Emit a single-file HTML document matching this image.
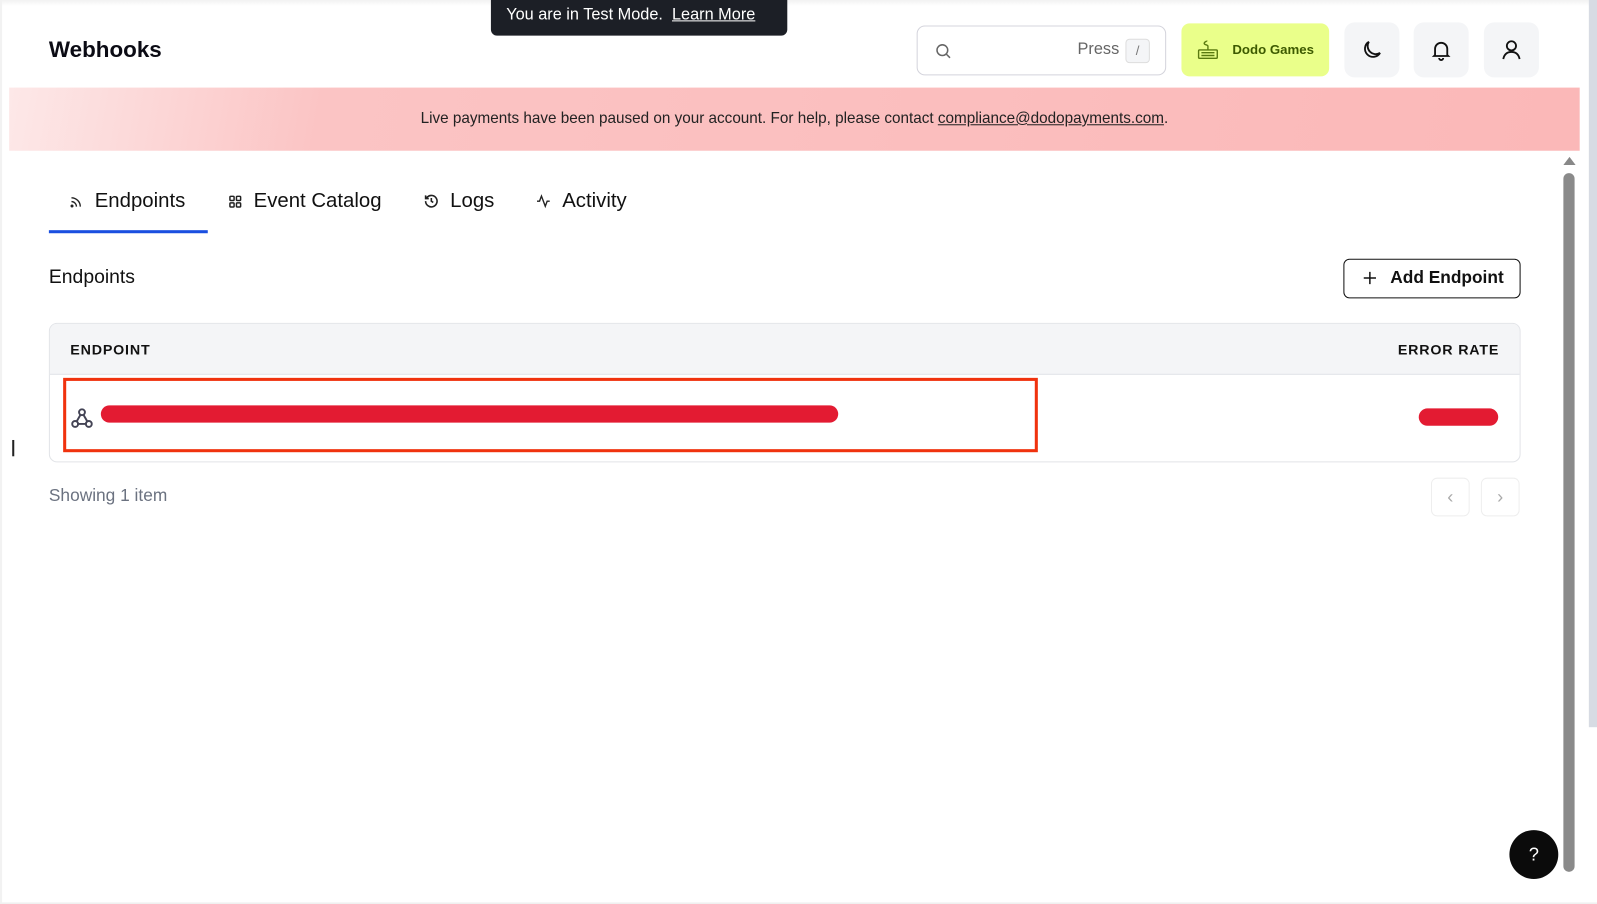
<!DOCTYPE html>
<html><head><meta charset="utf-8"><style>
*{box-sizing:border-box;margin:0;padding:0}
body{width:1597px;height:904px;overflow:hidden;background:#fff;font-family:"Liberation Sans",sans-serif;color:#111}
#w{position:absolute;left:0;top:0;width:1568px;height:888px;transform:scale(1.01849);transform-origin:0 0}
.abs{position:absolute}
.ib{position:absolute;top:22px;width:54px;height:54px;border-radius:10px;background:#f4f5f7;display:flex;align-items:center;justify-content:center}
</style></head><body><div id="w">
<div class="abs" style="left:0;top:0;width:1568px;height:6px;background:linear-gradient(#f2f2f2,#fff)"></div>
<div class="abs" style="left:48px;top:36px;font-size:22px;font-weight:bold;color:#0b0b14">Webhooks</div>
<div class="abs" style="left:482px;top:0;width:291px;height:35px;background:#1c1f26;border-radius:0 0 6px 6px;color:#fff;font-size:16px;line-height:29px;padding-left:15px">You are in Test Mode. &nbsp;<u>Learn More</u></div>
<div class="abs" style="left:900px;top:25px;width:245px;height:49px;border:1px solid #d4d4dc;border-radius:8px">
<svg class="abs" style="left:16px;top:15px" width="18" height="18" viewBox="0 0 24 24" fill="none" stroke="#666" stroke-width="2"><circle cx="11" cy="11" r="7"/><path d="M16 16l5 5"/></svg>
<span class="abs" style="left:157px;top:14px;font-size:16px;color:#666">Press</span>
<span class="abs" style="left:204px;top:12px;width:24px;height:24px;border:1px solid #ddd;border-radius:4px;background:#f4f5f7;font-size:13px;color:#777;text-align:center;line-height:22px">/</span></div>
<div class="abs" style="left:1160px;top:23px;width:145px;height:52px;background:#eaff8a;border-radius:8px;font-size:13px;font-weight:bold;color:#3d5a00;line-height:52px;padding-left:50px">Dodo Games
<svg class="abs" style="left:15px;top:15px" width="22" height="22" viewBox="0 0 24 24" fill="none" stroke="#5a7a10" stroke-width="1.5"><rect x="2" y="12" width="20" height="9" rx="1"/><path d="M5 15h14M5 18h14M12 12V8c0-2-4-1-4-3s3-2 3-3"/></svg></div>
<div class="ib" style="left:1320px"><svg width="24" height="24" viewBox="0 0 24 24" fill="none" stroke="#111" stroke-width="1.8"><path d="M20 15A8 8 0 0 1 9 4a8 8 0 1 0 11 11z"/></svg></div>
<div class="ib" style="left:1388px"><svg width="24" height="24" viewBox="0 0 24 24" fill="none" stroke="#111" stroke-width="1.8"><path d="M6 17V11a6 6 0 0 1 12 0v6l1 1H5zM10 20a2 2 0 0 0 4 0"/></svg></div>
<div class="ib" style="left:1457px"><svg width="24" height="24" viewBox="0 0 24 24" fill="none" stroke="#111" stroke-width="1.8"><circle cx="12" cy="8" r="4.5"/><path d="M4 21c1-5 4-7 8-7s7 2 8 7"/></svg></div>
<div class="abs" style="left:9px;top:86px;width:1542px;height:62px;background:linear-gradient(100deg,#fde8e8 0%,#fbc4c4 20%,#fbb8b8 100%);font-size:15px;color:#222;text-align:center;line-height:62px">Live payments have been paused on your account. For help, please contact <u>compliance@dodopayments.com</u>.</div>
<div class="abs" style="left:1535px;top:170px;width:11px;height:686px;background:#8a8a8a;border-radius:6px"></div>
<div class="abs" style="left:1535px;top:154px;width:0;height:0;border-left:6px solid transparent;border-right:6px solid transparent;border-bottom:8px solid #888"></div>
<div class="abs" style="left:1560px;top:0;width:8px;height:714px;background:#d7dbe3"></div>
<div class="abs" style="left:0;top:0;width:2px;height:888px;background:#f2f2f2"></div>
<svg class="abs" style="left:68px;top:192px" width="13" height="13" viewBox="0 0 24 24" fill="none" stroke="#222" stroke-width="2.5"><path d="M4 11a9 9 0 0 1 9 9M4 4a16 16 0 0 1 16 16"/><circle cx="5" cy="19" r="1.5"/></svg>
<div class="abs" style="left:93px;top:186px;font-size:20px">Endpoints</div>
<svg class="abs" style="left:224px;top:191px" width="14" height="14" viewBox="0 0 24 24" fill="none" stroke="#222" stroke-width="2.5"><rect x="3" y="3" width="7" height="7" rx="1.5"/><rect x="14" y="3" width="7" height="7" rx="1.5"/><rect x="3" y="14" width="7" height="7" rx="1.5"/><rect x="14" y="14" width="7" height="7" rx="1.5"/></svg>
<div class="abs" style="left:249px;top:186px;font-size:20px">Event Catalog</div>
<svg class="abs" style="left:416px;top:190px" width="15" height="15" viewBox="0 0 24 24" fill="none" stroke="#222" stroke-width="2.5"><path d="M3 12a9 9 0 1 0 3-6.7L3 8M3 3v5h5M12 7v5l3 2"/></svg>
<div class="abs" style="left:442px;top:186px;font-size:20px">Logs</div>
<svg class="abs" style="left:526px;top:190px" width="15" height="15" viewBox="0 0 24 24" fill="none" stroke="#222" stroke-width="2.2"><path d="M2 12h4l3-8 6 16 3-8h4"/></svg>
<div class="abs" style="left:552px;top:186px;font-size:20px">Activity</div>
<div class="abs" style="left:48px;top:226px;width:156px;height:3px;background:#1a4fe0"></div>
<div class="abs" style="left:48px;top:262px;font-size:19px">Endpoints</div>
<div class="abs" style="left:1319px;top:254px;width:174px;height:39px;border:1.5px solid #111;border-radius:6px;font-size:17px;font-weight:bold;line-height:36px;padding-left:45px">Add Endpoint
<svg class="abs" style="left:17px;top:10px" width="16" height="16" viewBox="0 0 24 24" stroke="#111" stroke-width="2.2"><path d="M12 3v18M3 12h18"/></svg></div>
<div class="abs" style="left:48px;top:317px;width:1445px;height:137px;border:1px solid #e2e4e8;border-radius:8px;overflow:hidden">
<div style="height:50px;background:#f4f5f7;border-bottom:1px solid #e2e4e8;font-size:14px;font-weight:bold;letter-spacing:.8px;line-height:50px;padding:0 20px;display:flex;justify-content:space-between"><span>ENDPOINT</span><span>ERROR RATE</span></div></div>
<div class="abs" style="left:62px;top:371px;width:957px;height:73px;border:3px solid #f0320e"></div>
<svg class="abs" style="left:69px;top:399px" width="23" height="23" viewBox="0 0 24 24" fill="none" stroke="#445" stroke-width="2" stroke-linecap="round"><circle cx="12" cy="6" r="3"/><circle cx="5" cy="18" r="3"/><circle cx="19" cy="18" r="3"/><path d="M10.5 8.6L6.5 15.5M13.5 8.6l4 6.9M8 18h8"/></svg>
<div class="abs" style="left:99px;top:398px;width:724px;height:17px;background:#e31b32;border-radius:9px"></div>
<div class="abs" style="left:1393px;top:401px;width:78px;height:17px;background:#e31b32;border-radius:9px"></div>
<div class="abs" style="left:12px;top:432px;width:2px;height:16px;background:#222"></div>
<div class="abs" style="left:48px;top:477px;font-size:17px;color:#6b7280">Showing 1 item</div>
<div class="abs" style="left:1405px;top:469px;width:38px;height:38px;border:1px solid #eee;border-radius:6px;color:#aaa;text-align:center;line-height:36px;font-size:18px">‹</div>
<div class="abs" style="left:1454px;top:469px;width:38px;height:38px;border:1px solid #eee;border-radius:6px;color:#aaa;text-align:center;line-height:36px;font-size:18px">›</div>
<div class="abs" style="left:1482px;top:815px;width:48px;height:48px;border-radius:50%;background:#0b0b0b;color:#fff;text-align:center;line-height:48px;font-size:18px">?</div>
<div class="abs" style="left:0;top:886px;width:1568px;height:2px;background:#f0f0f0"></div>
</div></body></html>
